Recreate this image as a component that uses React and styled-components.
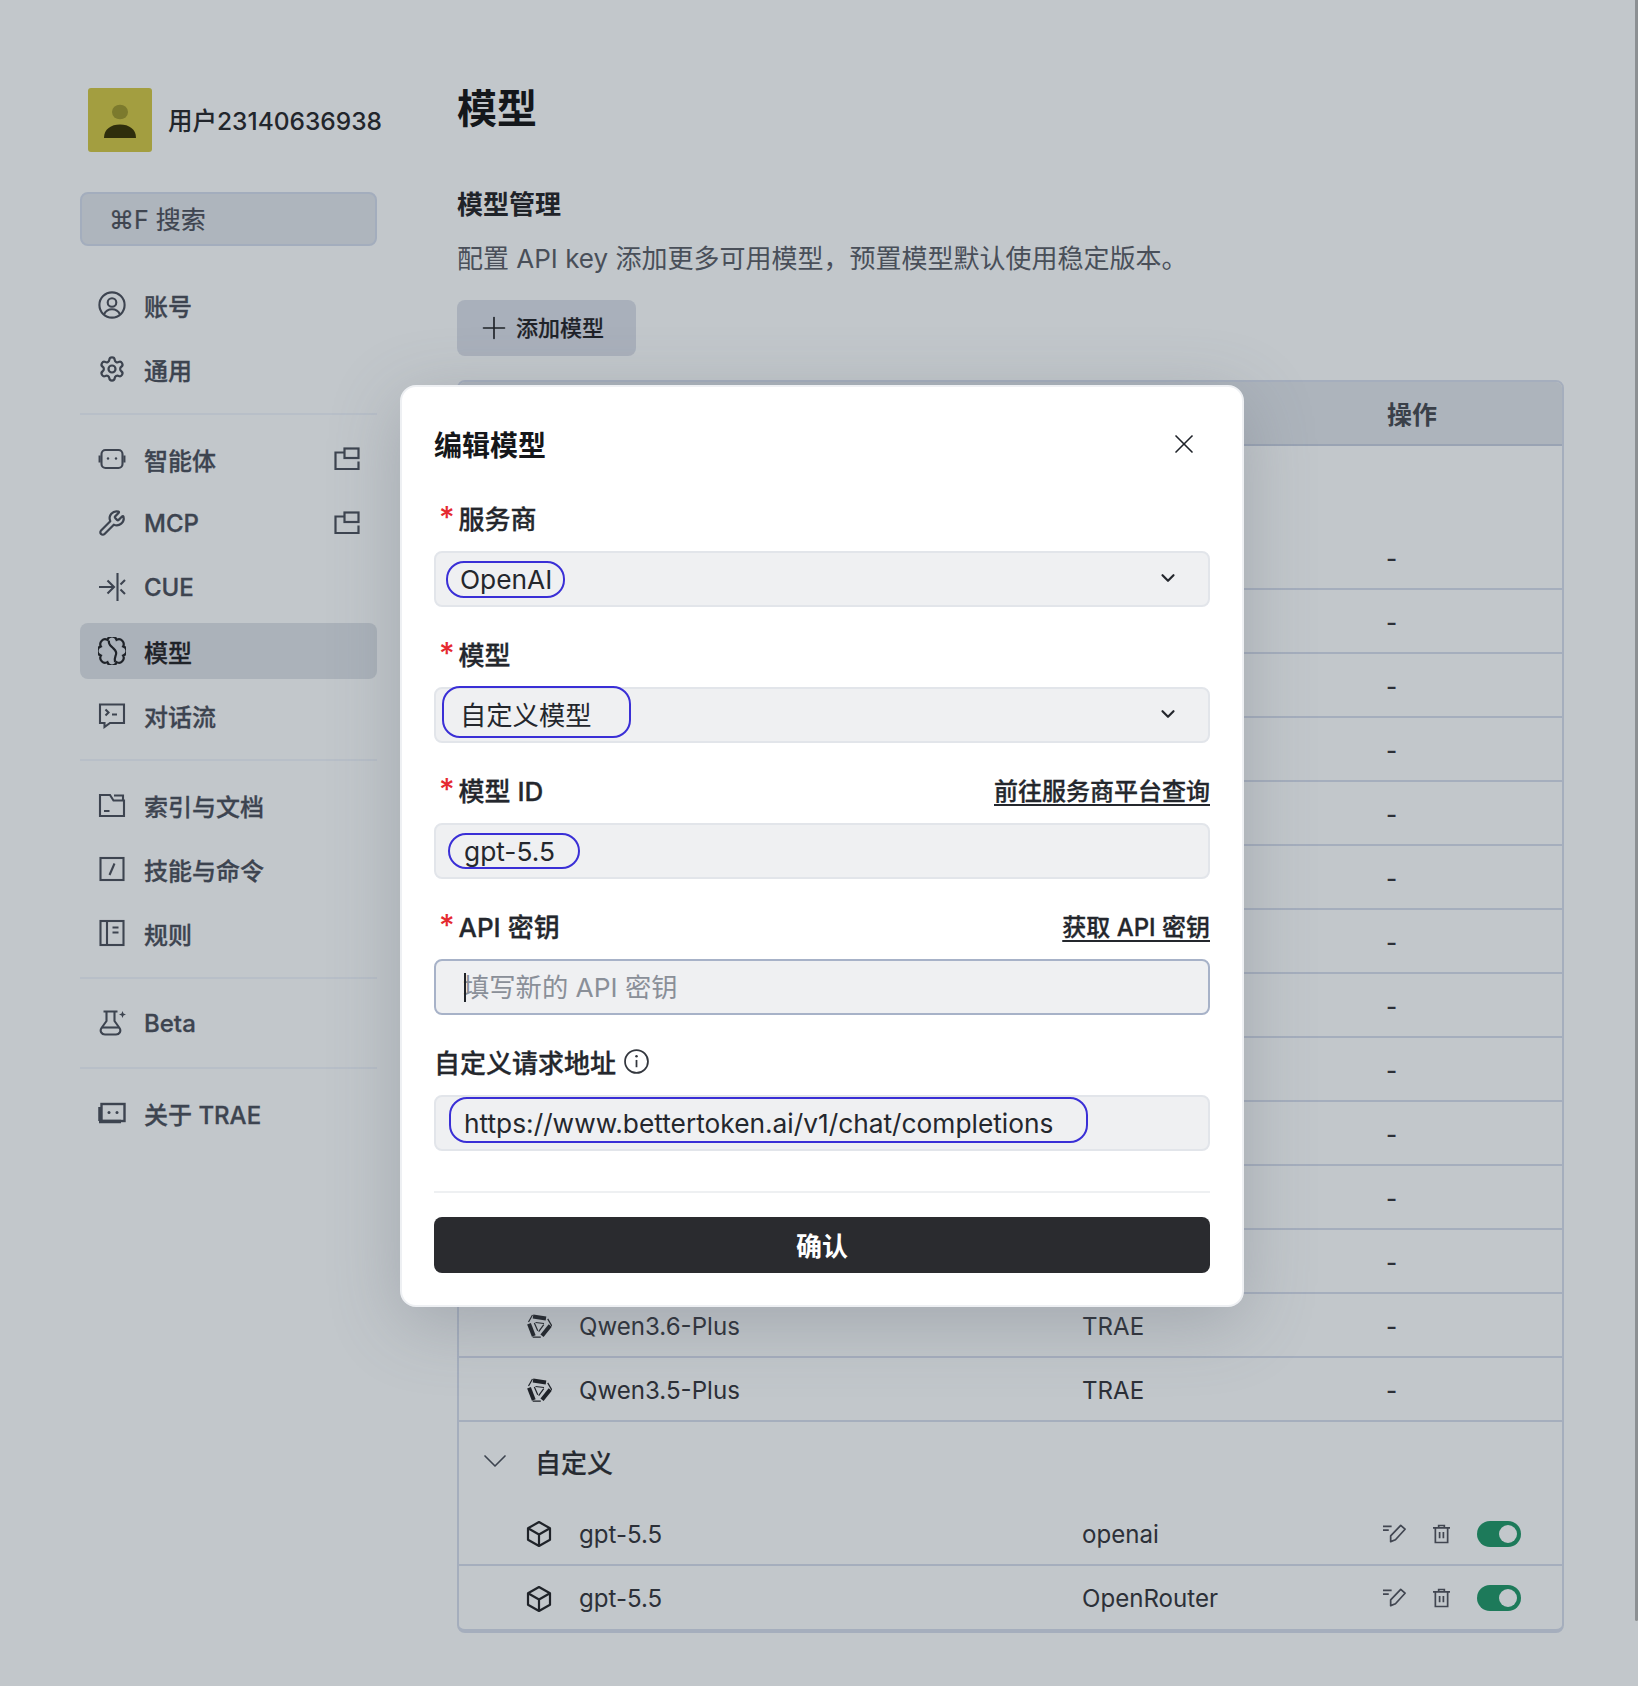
import styled, { createGlobalStyle } from "styled-components";
import { ChevronDown, Plus, X, Wrench, Settings } from "lucide-react";

const GlobalStyle = createGlobalStyle`
    html, body { margin: 0; padding: 0; }
    body {
        background: #c2c7cb;
        font-family: Inter, "Noto Sans CJK SC", sans-serif;
        color: #1f2329;
    }
    * { box-sizing: border-box; }
`;

const NAV_GROUPS = [
    [{ icon: "account", label: "账号" }, { icon: "gear", label: "通用" }],
    [
        { icon: "agent", label: "智能体", popout: true },
        { icon: "wrench", label: "MCP", popout: true },
        { icon: "cue", label: "CUE" },
        { icon: "model", label: "模型", active: true },
        { icon: "flow", label: "对话流" },
    ],
    [{ icon: "docs", label: "索引与文档" }, { icon: "slash", label: "技能与命令" }, { icon: "rules", label: "规则" }],
    [{ icon: "beta", label: "Beta" }],
    [{ icon: "about", label: "关于 TRAE" }],
];

function NavIcon({ name }) {
    if (name === "wrench") return <Wrench size={28} strokeWidth={1.9} />;
    if (name === "gear") return <Settings size={28} strokeWidth={1.9} />;
    const paths = {
        account: (
            <>
                <circle cx="14" cy="14" r="12.600" />
                <circle cx="14" cy="11.500" r="4.300" />
                <path d="M6 23.500c1.600-3.600 4.600-5.200 8-5.200s6.400 1.600 8 5.200" />
            </>
        ),
        agent: (
            <>
                <rect x="3.500" y="5" width="21" height="18" rx="4" />
                <path d="M1.600 10.500v7M26.400 10.500v7" />
                <circle cx="10" cy="13.500" r="1.200" fill="currentColor" stroke="none" />
                <circle cx="18" cy="13.500" r="1.200" fill="currentColor" stroke="none" />
            </>
        ),
        cue: (
            <>
                <path d="M1 14h15M9.500 7.500L16 14l-6.500 6.500" />
                <path d="M19.500 0v28M27 7l-4.500 4.500M27 21l-4.500-4.500" />
            </>
        ),
        model: (
            <>
                <path d="M25.100 9.400A4.800 4.800 0 0 1 25.100 18.600A4.800 4.800 0 0 1 18.600 25.100A4.800 4.800 0 0 1 9.400 25.100A4.800 4.800 0 0 1 2.900 18.600A4.800 4.800 0 0 1 2.900 9.400A4.800 4.800 0 0 1 9.400 2.900A4.800 4.800 0 0 1 18.600 2.900A4.800 4.800 0 0 1 25.100 9.400z" strokeWidth="2.200" />
                <path d="M11 3.500c-1 4 2 5.500 4 7.500s4 3.500 3 6.500-2 5-1 7.500" strokeWidth="2.200" />
            </>
        ),
        flow: (
            <>
                <path d="M2 3.500h24v18.500H12l-5.500 4v-4H2z" />
                <path d="M7.500 8.500l3 3-3 3M14 13.500h5" />
            </>
        ),
        docs: (
            <>
                <path d="M2 25V4h10l3.500 5.500H26V25z" />
                <path d="M16 4.500h9v5M6 20h5.500" />
            </>
        ),
        slash: (
            <>
                <rect x="2.500" y="3" width="23" height="22" />
                <path d="M16.500 8.500L11.500 20" />
            </>
        ),
        rules: (
            <>
                <rect x="2.500" y="2" width="23" height="24" />
                <path d="M9 2v24M14.500 8.500h6M14.500 13.500h6" />
            </>
        ),
        beta: (
            <>
                <path d="M5.500 2.500h14M8.500 2.500V12L3.500 19c-2 3 0 6.500 3.500 6.500h11c3.500 0 5.500-3.500 3.500-6.500L16.500 12V2.500" />
                <path d="M4 18.500h17" />
                <path d="M24.500 2l1 2.500 2.500 1-2.500 1-1 2.500-1-2.500-2.500-1 2.500-1z" fill="currentColor" stroke="none" />
            </>
        ),
        about: (
            <>
                <rect x="3.500" y="5" width="23" height="17" strokeWidth="2.400" />
                <path d="M2 8v14M1 22.500h22" strokeWidth="3.500" />
                <circle cx="11" cy="13.500" r="1.500" fill="currentColor" stroke="none" />
                <circle cx="19" cy="13.500" r="1.500" fill="currentColor" stroke="none" />
            </>
        ),
    };
    return (
        <svg width="28" height="28" viewBox="0 0 28 28" fill="none" stroke="currentColor" strokeWidth="2.100">
            {paths[name]}
        </svg>
    );
}

function PopoutIcon() {
    return (
        <svg width="26" height="24" viewBox="0 0 26 24" fill="none" stroke="currentColor" strokeWidth="2.200">
            <path d="M10 5.500H1.500v16.500h23v-7.500" />
            <rect x="10.500" y="1.500" width="14" height="9.500" />
        </svg>
    );
}

function QwenLogo() {
    const blade = (
        <>
            <path d="M7 4.500L20 6.500" stroke="#1f2329" strokeWidth="4" />
            <path d="M6.500 3L2.500 10" stroke="#1f2329" strokeWidth="1.200" />
            <path d="M9.500 10.500L18 11.500" stroke="#1f2329" strokeWidth="1.200" />
        </>
    );
    return (
        <svg width="26" height="28" viewBox="0 0 26 28" fill="none">
            <g>{blade}</g>
            <g transform="rotate(120 13 14)">{blade}</g>
            <g transform="rotate(240 13 14)">{blade}</g>
        </svg>
    );
}

function CubeIcon() {
    return (
        <svg width="26" height="28" viewBox="0 0 26 28" fill="none" stroke="#1f2329" strokeWidth="2.200" strokeLinejoin="round">
            <path d="M13 2l11 6.300v11.400L13 26 2 19.700V8.300z" />
            <path d="M2.500 8.500L13 14.500l10.500-6M13 14.500V26" />
        </svg>
    );
}

function EditIcon() {
    return (
        <svg width="23" height="20" viewBox="0 0 24 20" fill="none" stroke="#414651" strokeWidth="1.800">
            <path d="M0 2h9M0 6h6" />
            <path d="M18.500 1l4.500 4-10 11-5 2v-6z" strokeLinejoin="round" />
        </svg>
    );
}

function TrashIcon() {
    return (
        <svg width="17" height="20" viewBox="0 0 18 20" fill="none" stroke="#414651" strokeWidth="1.800">
            <path d="M0 3.500h18M6 3.500V1h6v2.500" />
            <path d="M2.500 3.500V19h13V3.500" />
            <path d="M7 8v6.500M11 8v6.500" />
        </svg>
    );
}

function InfoIcon() {
    return (
        <InfoSlot>
            <svg width="25" height="25" viewBox="0 0 24 24" fill="none" stroke="#33373e" strokeWidth="1.700">
                <circle cx="12" cy="12" r="11" />
                <path d="M12 10.500v7" />
                <circle cx="12" cy="7" r="1.200" fill="#33373e" stroke="none" />
            </svg>
        </InfoSlot>
    );
}

const PRESET_ROWS = [...Array(12).fill(null), { name: "Qwen3.6-Plus", provider: "TRAE" }, { name: "Qwen3.5-Plus", provider: "TRAE" }];
const CUSTOM_ROWS = [
    { name: "gpt-5.5", provider: "openai" },
    { name: "gpt-5.5", provider: "OpenRouter" },
];

export default function App() {
    return (
        <>
            <GlobalStyle />
            <Page>
                <Sidebar>
                    <Profile>
                        <Avatar>
                            <svg width="36" height="36" viewBox="0 0 36 36">
                                <ellipse cx="18" cy="8" rx="8" ry="7.300" fill="#7c7a2d" />
                                <path d="M2 34c0-9 7-13.500 16-13.500S34 25 34 34z" fill="#2f2e0c" />
                            </svg>
                        </Avatar>
                        <UserName>用户23140636938</UserName>
                    </Profile>
                    <SearchBox>⌘F 搜索</SearchBox>
                    <Nav>
                        {NAV_GROUPS.map((group, i) => (
                            <NavGroup key={i}>
                                {group.map((item) => (
                                    <NavItem key={item.label} $active={item.active}>
                                        <NavIcon name={item.icon} />
                                        <NavLabel>{item.label}</NavLabel>
                                        {item.popout && <PopoutSlot><PopoutIcon /></PopoutSlot>}
                                    </NavItem>
                                ))}
                            </NavGroup>
                        ))}
                    </Nav>
                </Sidebar>
                <Main>
                    <PageTitle>模型</PageTitle>
                    <SectionTitle>模型管理</SectionTitle>
                    <Description>配置 API key 添加更多可用模型，预置模型默认使用稳定版本。</Description>
                    <AddButton>
                        <Plus size={36} strokeWidth={1.1} />
                        <AddLabel>添加模型</AddLabel>
                    </AddButton>
                    <Table>
                        <TableHead>操作</TableHead>
                        <GroupHead />
                        {PRESET_ROWS.map((row, i) => (
                            <Row key={i}>
                                <RowName>
                                    {row && <QwenLogo />}
                                    {row && row.name}
                                </RowName>
                                <RowProvider>{row && row.provider}</RowProvider>
                                <RowActions>-</RowActions>
                            </Row>
                        ))}
                        <GroupHead>
                            <ChevronDown size={40} strokeWidth={1} color="#3d4450" />
                            自定义
                        </GroupHead>
                        {CUSTOM_ROWS.map((row, i) => (
                            <Row key={i}>
                                <RowName>
                                    <CubeIcon />
                                    {row.name}
                                </RowName>
                                <RowProvider>{row.provider}</RowProvider>
                                <RowTools>
                                    <EditIcon />
                                    <TrashIcon />
                                    <Toggle />
                                </RowTools>
                            </Row>
                        ))}
                    </Table>
                </Main>
                <Modal>
                    <ModalHead>
                        <ModalTitle>编辑模型</ModalTitle>
                        <CloseButton><X size={32} strokeWidth={1.25} /></CloseButton>
                    </ModalHead>

                    <Label $first>
                        <LabelText><Star>*</Star>服务商</LabelText>
                    </Label>
                    <Field>
                        <FieldText $indent={24}>OpenAI</FieldText>
                        <Circled $left={10} $top={8} $width={119} $height={37} />
                        <FieldChevron><ChevronDown size={22} strokeWidth={2.4} /></FieldChevron>
                    </Field>

                    <Label>
                        <LabelText><Star>*</Star>模型</LabelText>
                    </Label>
                    <Field>
                        <FieldText $indent={24} $cjk>自定义模型</FieldText>
                        <Circled $left={6} $top={-3} $width={189} $height={52} />
                        <FieldChevron><ChevronDown size={22} strokeWidth={2.4} /></FieldChevron>
                    </Field>

                    <Label>
                        <LabelText><Star>*</Star>模型 ID</LabelText>
                        <LabelLink>前往服务商平台查询</LabelLink>
                    </Label>
                    <Field>
                        <FieldText $indent={28}>gpt-5.5</FieldText>
                        <Circled $left={12} $top={8} $width={132} $height={36} />
                    </Field>

                    <Label>
                        <LabelText><Star>*</Star>API 密钥</LabelText>
                        <LabelLink>获取 API 密钥</LabelLink>
                    </Label>
                    <Field $focused>
                        <Caret />
                        <FieldText $indent={27} $muted $cjk>填写新的 API 密钥</FieldText>
                    </Field>

                    <Label>
                        <LabelText>自定义请求地址 <InfoIcon /></LabelText>
                    </Label>
                    <Field>
                        <FieldText $indent={28}>https://www.bettertoken.ai/v1/chat/completions</FieldText>
                        <Circled $left={13} $top={0} $width={639} $height={46} />
                    </Field>

                    <ModalDivider />
                    <ConfirmButton>确认</ConfirmButton>
                </Modal>
                <Scrollbar />
            </Page>
        </>
    );
}

const Page = styled.div`
    position: relative;
    display: flex;
    width: 1638px;
    height: 1686px;
    overflow: hidden;
    padding: 88px 74px 0 80px;
`;

const Sidebar = styled.aside`
    width: 297px;
    flex-shrink: 0;
    margin-right: 80px;
`;

const Profile = styled.div`
    display: flex;
    align-items: center;
    gap: 16px;
    padding-left: 8px;
    height: 64px;
`;

const Avatar = styled.div`
    width: 64px;
    height: 64px;
    flex-shrink: 0;
    border-radius: 3px;
    background: #a39e40;
    display: flex;
    align-items: center;
    justify-content: center;
    padding-top: 4px;
`;

const UserName = styled.div`
    font-size: 24.500px;
    font-weight: 500;
    white-space: nowrap;
    color: #22262c;
    padding-bottom: 1px;
`;

const SearchBox = styled.div`
    margin-top: 40px;
    height: 54px;
    border: 2px solid #a3adbd;
    border-radius: 8px;
    background: #aeb5bd;
    display: flex;
    align-items: center;
    padding: 0 0 3px 27px;
    font-size: 25px;
    color: #3f4550;
    -webkit-text-stroke: 0.2px currentColor;
`;

const Nav = styled.nav`
    margin-top: 15px;
`;

const NavGroup = styled.div`
    display: flex;
    flex-direction: column;
    gap: 8px;
    padding: 16px 0;
    border-bottom: 2px solid #b8bfc8;
    &:last-child { border-bottom: 0; }
`;

const NavItem = styled.div`
    position: relative;
    display: flex;
    align-items: center;
    gap: 18px;
    height: 56px;
    padding: 0 18px;
    border-radius: 8px;
    font-size: 24px;
    font-weight: 500;
    -webkit-text-stroke: 0.3px currentColor;
    color: ${(p) => (p.$active ? "#1f2329" : "#3d4450")};
    background: ${(p) => (p.$active ? "#abb2ba" : "transparent")};
`;

const NavLabel = styled.span`
    white-space: nowrap;
    flex: 1;
`;

const PopoutSlot = styled.span`
    display: flex;
    margin-right: -1px;
`;

const Main = styled.main`
    flex: 1;
    min-width: 0;
`;

const PageTitle = styled.h1`
    margin: 0;
    font-size: 40px;
    line-height: 42px;
    font-weight: 700;
    color: #14171b;
`;

const SectionTitle = styled.h2`
    margin: 58px 0 0;
    font-size: 26px;
    line-height: 34px;
    font-weight: 700;
    color: #1f2329;
`;

const Description = styled.p`
    margin: 20px 0 0;
    font-size: 26px;
    line-height: 34px;
    color: #494f59;
    white-space: nowrap;
`;

const AddButton = styled.div`
    margin-top: 24px;
    width: 179px;
    height: 56px;
    border-radius: 8px;
    background: #a9b0bb;
    display: flex;
    align-items: center;
    gap: 4px;
    padding-left: 19px;
    color: #1f2329;
`;

const AddLabel = styled.span`
    padding-bottom: 4px;
    font-size: 22px;
    font-weight: 500;
    -webkit-text-stroke: 0.2px currentColor;
`;

const Table = styled.div`
    margin-top: 24px;
    border: 2px solid #a5aebd;
    border-bottom-width: 4px;
    border-radius: 8px;
    overflow: hidden;
`;

const TableHead = styled.div`
    height: 64px;
    background: #adb4bc;
    border-bottom: 2px solid #99a3b3;
    display: flex;
    align-items: center;
    padding-left: 928px;
    font-size: 25px;
    font-weight: 700;
    color: #3a4049;
`;

const GroupHead = styled.div`
    height: 80px;
    padding-bottom: 2px;
    display: flex;
    align-items: center;
    gap: 20px;
    padding-left: 16px;
    font-size: 26px;
    font-weight: 500;
    -webkit-text-stroke: 0.2px currentColor;
    color: #262a31;
`;

const Row = styled.div`
    height: 64px;
    padding-top: 2px;
    display: flex;
    align-items: center;
    font-size: 24.100px;
    color: #2c3038;
    border-bottom: 2px solid #a5aebd;
    &:last-child { height: 63px; border-bottom: 0; }
`;

const RowName = styled.div`
    width: 623px;
    display: flex;
    align-items: center;
    gap: 27px;
    padding-left: 67px;
`;

const RowProvider = styled.div`
    width: 304px;
`;

const RowActions = styled.div`
    padding-top: 1px;
    font-weight: 500;
    color: #2c3038;
`;

const RowTools = styled.div`
    display: flex;
    align-items: center;
    margin: -1px 0 0 -3px;
    gap: 27px;
`;

const Toggle = styled.div`
    position: relative;
    width: 44px;
    height: 26px;
    border-radius: 13px;
    background: #1d7a5a;
    &::after {
        content: "";
        position: absolute;
        right: 4px;
        top: 4px;
        width: 18px;
        height: 18px;
        border-radius: 50%;
        background: #c2c7cb;
    }
`;

const Modal = styled.section`
    position: absolute;
    left: 400px;
    top: 385px;
    width: 844px;
    height: 922px;
    padding: 0 32px;
    background: #fff;
    border: 2px solid #eef0f3;
    border-radius: 16px;
    box-shadow: 0 16px 70px rgba(90, 95, 110, 0.3);
`;

const ModalHead = styled.div`
    display: flex;
    align-items: center;
    justify-content: space-between;
    height: 115px;
    padding-bottom: 2px;
`;

const ModalTitle = styled.h3`
    margin: 0;
    font-size: 28px;
    font-weight: 700;
    color: #15171a;
`;

const CloseButton = styled.div`
    display: flex;
    margin-right: 10px;
    color: #1f2329;
`;

const Label = styled.div`
    display: flex;
    align-items: center;
    justify-content: space-between;
    height: 30px;
    margin-top: ${(p) => (p.$first ? "0" : "31px")};
    margin-bottom: 19px;
`;

const LabelText = styled.span`
    display: flex;
    align-items: center;
    gap: 6px;
    font-size: 26px;
    font-weight: 500;
    -webkit-text-stroke: 0.3px currentColor;
    color: #24272d;
`;

const InfoSlot = styled.span`
    display: flex;
    margin-left: 2px;
`;

const Star = styled.span`
    color: #e5292f;
    width: 18.500px;
    padding-left: 5px;
    font-size: 30px;
    line-height: 30px;
    -webkit-text-stroke: 0;
`;

const LabelLink = styled.a`
    font-size: 24px;
    font-weight: 500;
    -webkit-text-stroke: 0.3px currentColor;
    color: #24272d;
    text-decoration: underline;
    text-underline-offset: 4px;
`;

const Field = styled.div`
    position: relative;
    height: 56px;
    display: flex;
    align-items: center;
    background: #eff0f2;
    border: 2px solid ${(p) => (p.$focused ? "#a7b2c8" : "#e2e5ea")};
    border-radius: 8px;
`;

const FieldText = styled.span`
    padding-left: ${(p) => p.$indent}px;
    padding-bottom: ${(p) => (p.$cjk ? 3 : 0)}px;
    font-size: 26.300px;
    white-space: nowrap;
    color: ${(p) => (p.$muted ? "#8a8f98" : "#24272d")};
`;

const Circled = styled.span`
    position: absolute;
    left: ${(p) => p.$left}px;
    top: ${(p) => p.$top}px;
    width: ${(p) => p.$width}px;
    height: ${(p) => p.$height}px;
    border: 2px solid #3a2fd6;
    border-radius: 18px;
`;

const FieldChevron = styled.span`
    position: absolute;
    right: 29px;
    top: 14px;
    display: flex;
    color: #24272d;
`;

const Caret = styled.span`
    position: absolute;
    left: 28px;
    top: 12px;
    width: 2px;
    height: 29px;
    background: #1f2329;
`;

const ModalDivider = styled.div`
    height: 2px;
    margin-top: 40px;
    background: #eef0f2;
`;

const ConfirmButton = styled.div`
    margin-top: 24px;
    height: 56px;
    padding-bottom: 2px;
    border-radius: 8px;
    background: #2a2b2f;
    color: #fff;
    display: flex;
    align-items: center;
    justify-content: center;
    font-size: 26px;
    font-weight: 700;
`;

const Scrollbar = styled.div`
    position: absolute;
    right: 0;
    top: 0;
    width: 3px;
    height: 1621px;
    background: #8c9093;
    border-radius: 0 0 2px 2px;
`;
